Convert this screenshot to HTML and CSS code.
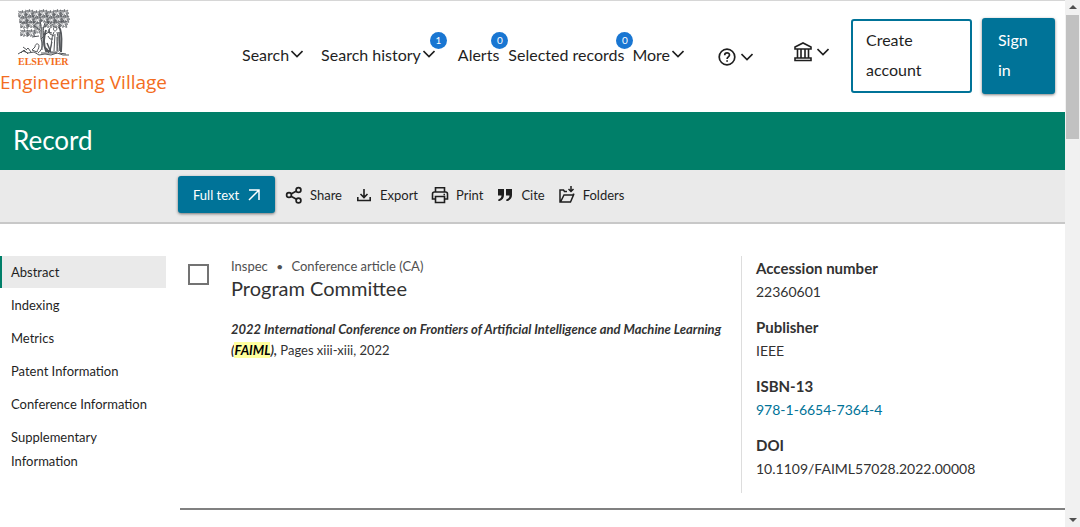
FILE: index.html
```html
<!DOCTYPE html>
<html lang="en">
<head>
    <meta charset="UTF-8">
    <meta name="viewport" content="width=device-width, initial-scale=1.0">
    <title>Engineering Village - Record</title>
    <link rel="stylesheet" href="styles.css">
</head>
<body>
    <svg class="defs" aria-hidden="true">
        <symbol id="chevron" viewBox="0 0 12 8"><path d="M.5 1L6 6.500 11.500 1" fill="none" stroke="currentColor" stroke-width="1.6"/></symbol>
        <symbol id="leaves" viewBox="0 0 12 10">
            <path d="M1 4l2-3 1 2 2-3 1 3 3-2-1 3 3 1-3 2 1 3-3-2-2 2-1-3-3 2 1-3-3 0 2-2zM2 2l3 3M6 1v3M10 3L7 5M1 8l4-2M6 9V6M10 8L8 5M4 3l3-1M1 5h3M8 6h3M0 1l2 1M11 1l-1 1M0 7l2 1M11 9L9 8" fill="none" stroke="#53565a" stroke-width=".8"/>
        </symbol>
    </svg>

    <div class="page">
        <header class="header">
            <a href="#" class="brand">
                <svg class="tree" viewBox="0 0 52 47" aria-hidden="true">
                    <use href="#leaves" x="0" y="1" width="9" height="8"/>
                    <use href="#leaves" x="7" y="0" width="9" height="8"/>
                    <use href="#leaves" x="14" y="1" width="9" height="8"/>
                    <use href="#leaves" x="21" y="0" width="9" height="8"/>
                    <use href="#leaves" x="28" y="1" width="9" height="8"/>
                    <use href="#leaves" x="35" y="0" width="9" height="8"/>
                    <use href="#leaves" x="42" y="0" width="9" height="8"/>
                    <use href="#leaves" x="1" y="7" width="9" height="8"/>
                    <use href="#leaves" x="8" y="6" width="9" height="8"/>
                    <use href="#leaves" x="15" y="7" width="9" height="8"/>
                    <use href="#leaves" x="22" y="6" width="9" height="8"/>
                    <use href="#leaves" x="29" y="7" width="9" height="8"/>
                    <use href="#leaves" x="36" y="6" width="9" height="8"/>
                    <use href="#leaves" x="43" y="6" width="9" height="8"/>
                    <use href="#leaves" x="2" y="12" width="9" height="8"/>
                    <use href="#leaves" x="9" y="12" width="9" height="7"/>
                    <use href="#leaves" x="16" y="13" width="8" height="6"/>
                    <use href="#leaves" x="26" y="12" width="9" height="7"/>
                    <use href="#leaves" x="34" y="12" width="9" height="7"/>
                    <use href="#leaves" x="41" y="11" width="9" height="8"/>
                    <use href="#leaves" x="2" y="20" width="9" height="8"/>
                    <use href="#leaves" x="9" y="20" width="9" height="8"/>
                    <use href="#leaves" x="16" y="18" width="7" height="7"/>
                    <g fill="none" stroke="#53565a">
                        <path d="M22 13c3 8-1 14 2 20 1 5-1 9-4 11M27 14c-3 7-1 13-1 19s2 8 5 11M24 18v23M25 19l6-5M22 21l-6-4M21 27l-7 1M23 30l6-6 3-1"/>
                        <path d="M28 21c-3 8-2 16 0 21h5M41 18c4 5 2 17 2 25" stroke-width="2"/>
                        <path d="M37 18c-2 0-2 4 0 4s3-4 0-4zM36 23c-3 5-2 12-4 20h7M39 23c2 6 0 13 1 20M36 27l-4-2-1-5M35 30l-3 0-2-3M37 25l-1 17M39 28v14M32 19l-2 4 4 1M34 33l-2 8"/>
                        <path d="M0 45l5-3 5 2 6-1 5 3 6-1 6 1 6-2 6 2h6M3 44l3-3 4 4M5 38l4 3M8 41l2-2 3 4M23 44h16M41 44l7 1M17 38c0-4 4-4 4-1s-2 4-2 6l-5-2z"/>
                        <path d="M29 34l3 7M28 39l3 4M41 23l1 19" stroke-width="1.5"/>
                    </g>
                </svg>
                <span class="elsevier">ELSEVIER</span>
                <span class="product">Engineering Village</span>
            </a>
            <nav class="nav" aria-label="Main">
                <a href="#">Search<svg class="chevron"><use href="#chevron"/></svg></a>
                <a href="#" class="history">Search history<svg class="chevron"><use href="#chevron"/></svg><span class="badge">1</span></a>
                <a href="#" class="alerts">Alerts<span class="badge">0</span></a>
                <a href="#" class="selected">Selected records<span class="badge">0</span></a>
                <a href="#">More<svg class="chevron"><use href="#chevron"/></svg></a>
            </nav>
            <div class="account">
                <button type="button" class="icon-button help" aria-label="Help">
                    <svg width="18" height="18" viewBox="0 0 18 18" fill="none" stroke="currentColor" stroke-width="1.7"><circle cx="9" cy="9" r="7.8"/><path d="M6.7 7.2c0-3 4.8-3 4.8-.2 0 2-2.4 1.8-2.4 4M9.1 12.2v1.6"/></svg>
                    <svg class="chevron"><use href="#chevron"/></svg>
                </button>
                <button type="button" class="icon-button institution" aria-label="Institution">
                    <svg width="18" height="20" viewBox="0 0 18 20" fill="none" stroke="currentColor" stroke-width="1.6"><path d="M1 7V5l8-4 8 4v2zM3.500 7v8.500M7 7v8.500M11 7v8.500M14.500 7v8.500M1 18.500v-2.500h16v2.500z"/></svg>
                    <svg class="chevron"><use href="#chevron"/></svg>
                </button>
                <button type="button" class="create">Create account</button>
                <button type="button" class="signin">Sign in</button>
            </div>
        </header>

        <h1 class="title">Record</h1>

        <div class="toolbar">
            <a href="#" class="fulltext">Full text
                <svg width="12" height="12" viewBox="0 0 12 12" fill="none" stroke="currentColor" stroke-width="1.5"><path d="M1 1h10v10M11 1L1 11"/></svg>
            </a>
            <button type="button" class="tool">
                <svg viewBox="0 0 18 18" fill="none" stroke="currentColor" stroke-width="1.7"><circle cx="4" cy="9" r="2.4"/><circle cx="13.500" cy="4" r="2.400"/><circle cx="13.500" cy="14.500" r="2.400"/><path d="M6 8l5.500-3M6 10.200l5.500 3"/></svg>
                Share
            </button>
            <button type="button" class="tool">
                <svg viewBox="0 0 18 18" fill="none" stroke="currentColor" stroke-width="1.6"><path d="M9 3v8M5.500 8L9 11.500 12.500 8M2.800 11v3.500h12.400V11"/></svg>
                Export
            </button>
            <button type="button" class="tool">
                <svg viewBox="0 0 18 18" fill="none" stroke="currentColor" stroke-width="1.6"><path d="M4.500 6V1.800h9V6M4.500 13H1.500V8c0-1.500 1-2 2-2h11c1 0 2 .5 2 2v5h-3M4.500 10.500h9v6h-9zM12.500 8.500h1.500"/></svg>
                Print
            </button>
            <button type="button" class="tool">
                <svg viewBox="0 0 18 18" fill="currentColor"><path d="M2 3h6v6c0 3-1.500 5-4.500 6H2.300v-1.500C4.500 12.700 5.500 11.500 5.500 9.500H2zM10 3h6v6c0 3-1.500 5-4.500 6h-1.200v-1.500c2.200-.8 3.200-2 3.200-4H10z"/></svg>
                Cite
            </button>
            <button type="button" class="tool">
                <svg viewBox="0 0 18 18" fill="none" stroke="currentColor" stroke-width="1.5"><path d="M9 5.500H6.500l-1-1.500H2v12h10.500l3-7H6l-3.500 7M15.500 9V7.500M13 0v5.500M10.500 3l2.500 2.500L15.500 3"/></svg>
                Folders
            </button>
        </div>

        <div class="content">
            <nav class="sidebar" aria-label="Record sections">
                <a href="#" class="active">Abstract</a>
                <a href="#">Indexing</a>
                <a href="#">Metrics</a>
                <a href="#">Patent Information</a>
                <a href="#">Conference Information</a>
                <a href="#">Supplementary Information</a>
            </nav>
            <main class="record">
                <input type="checkbox" class="select" aria-label="Select record">
                <article class="article">
                    <p class="type">Inspec <span class="dot">•</span> Conference article (CA)</p>
                    <h2>Program Committee</h2>
                    <p class="source"><b><i>2022 International Conference on Frontiers of Artificial Intelligence and Machine Learning (<mark>FAIML</mark>),</i></b> Pages xiii-xiii, 2022</p>
                </article>
                <dl class="details">
                    <dt>Accession number</dt>
                    <dd>22360601</dd>
                    <dt>Publisher</dt>
                    <dd>IEEE</dd>
                    <dt>ISBN-13</dt>
                    <dd><a href="#">978-1-6654-7364-4</a></dd>
                    <dt>DOI</dt>
                    <dd>10.1109/FAIML57028.2022.00008</dd>
                </dl>
            </main>
        </div>
    </div>

    <div class="scrollbar" aria-hidden="true">
        <span class="arrow up"></span>
        <span class="thumb"></span>
        <span class="arrow down"></span>
    </div>
</body>
</html>
```
FILE: styles.css
```css
* {
    box-sizing: border-box;
}
body {
    display: flex;
    height: 100vh;
    margin: 0;
    overflow: hidden;
    font-family: Lato, "Open Sans", sans-serif;
    font-size: 13px;
    color: #1f1f1f;
    background-color: #fff;
}
a {
    color: inherit;
    text-decoration: none;
}
button {
    font: inherit;
    color: inherit;
    background: none;
    border: 0;
    padding: 0;
    cursor: pointer;
}
.defs {
    position: absolute;
    width: 0;
    height: 0;
}
.page {
    flex: 1;
    min-width: 0;
}

/* Header */
.header {
    display: flex;
    height: 112px;
    padding-right: 10px;
    border-top: 1px solid #d6d6d6;
}
.brand {
    display: flex;
    flex-direction: column;
    width: 242px;
    padding-top: 8px;
    color: #f36d21;
}
.tree {
    width: 52px;
    height: 47px;
    margin-left: 18px;
}
.elsevier {
    margin-left: 18px;
    font-family: "Liberation Serif", serif;
    font-size: 10px;
    font-weight: bold;
    line-height: 12px;
}
.product {
    font-family: "Open Sans", sans-serif;
    font-size: 19px;
    line-height: 28px;
}
.nav {
    display: flex;
    height: 107px;
    align-items: center;
    font-size: 16px;
    white-space: nowrap;
}
.nav a {
    position: relative;
    margin-right: 18px;
}
.nav .history {
    margin-right: 23px;
}
.nav .alerts {
    margin-right: 9px;
}
.nav .selected {
    margin-right: 8px;
}
.chevron {
    width: 12px;
    height: 8px;
}
.nav .chevron {
    margin-left: 2px;
    vertical-align: 3px;
}
.badge {
    position: absolute;
    top: -13px;
    right: -9px;
    width: 17px;
    height: 17px;
    border-radius: 50%;
    background-color: #1976d2;
    color: #fff;
    font-size: 10px;
    line-height: 17px;
    text-align: center;
}
.nav .history .badge {
    right: -12px;
}
.account {
    display: flex;
    align-items: flex-start;
    margin-left: auto;
    font-size: 16px;
    line-height: 30px;
}
.icon-button {
    display: flex;
    align-items: center;
    gap: 5px;
}
.help {
    margin: 47px 41px 0 0;
}
.institution {
    margin: 41px 22px 0 0;
}
.create,
.signin {
    padding: 4px 13px;
    border: 2px solid #007398;
    border-radius: 3px;
    text-align: left;
}
.create {
    width: 121px;
    margin-top: 18px;
    padding-bottom: 6px;
}
.signin {
    width: 73px;
    margin: 17px 0 0 10px;
    padding: 5px 14px 7px;
    background-color: #007398;
    color: #fff;
    box-shadow: 0 1px 3px rgba(0, 0, 0, 0.5);
}
.title {
    margin: 0;
    padding: 0 0 2px 13px;
    background-color: #007f69;
    color: #fff;
    font-size: 26px;
    font-weight: normal;
    line-height: 56px;
}

/* Toolbar */
.toolbar {
    display: flex;
    height: 54px;
    padding: 6px 0 0 178px;
    background-color: #eaeaea;
    border-bottom: 2px solid #c8c8c8;
}
.fulltext {
    display: flex;
    align-items: center;
    justify-content: space-between;
    width: 97px;
    height: 37px;
    margin-right: -3px;
    padding: 0 15px;
    border-radius: 3px;
    background-color: #007398;
    color: #fff;
    box-shadow: 0 1px 3px rgba(0, 0, 0, 0.5);
}
.tool {
    display: flex;
    align-items: center;
    gap: 7px;
    height: 37px;
    margin-left: 13px;
}
.tool svg {
    width: 18px;
    height: 18px;
}

/* Record */
.content {
    display: flex;
    align-items: flex-start;
    padding-top: 32px;
}
.sidebar {
    width: 166px;
    margin-right: 14px;
}
.sidebar a {
    display: block;
    margin-bottom: 1px;
    padding: 4px 9px;
    border-left: 2px solid transparent;
    line-height: 24px;
}
.sidebar .active {
    border-left-color: #007f69;
    background-color: #eaeaea;
}
.record {
    display: flex;
    flex: 1;
    align-items: flex-start;
    padding: 0 0 15px 8px;
    border-bottom: 2px solid #808080;
    color: #323232;
}
.select {
    appearance: none;
    width: 21px;
    height: 21px;
    margin: 8px 22px 0 0;
    border: 2px solid #737373;
}
.article {
    flex: 1;
    padding-right: 8px;
}
.article p {
    margin: 0;
    line-height: 21px;
}
.article .type {
    color: #505050;
}
.dot {
    margin: 0 5px;
    font-size: 12px;
}
.article h2 {
    margin: 0 0 19px;
    font-size: 20px;
    font-weight: normal;
    line-height: 23px;
}
mark {
    background-color: #ffff9e;
    color: #000;
}
.details {
    width: 324px;
    height: 237px;
    margin: 0;
    padding-left: 14px;
    border-left: 1px solid #ddd;
    font-size: 14px;
    line-height: 24px;
}
.details dt {
    font-size: 15px;
    font-weight: bold;
}
.details dd {
    margin: 0 0 11px;
}
.details a {
    color: #007398;
}

/* Scrollbar */
.scrollbar {
    display: flex;
    flex-direction: column;
    align-items: center;
    width: 15px;
    padding: 5px 0;
    background-color: #f1f1f1;
}
.arrow {
    border: 4px solid transparent;
}
.up {
    margin-bottom: 2px;
    border-bottom-color: #505050;
    border-top: 0;
}
.down {
    margin-top: auto;
    border-top-color: #505050;
    border-bottom: 0;
}
.thumb {
    width: 13px;
    height: 124px;
    margin-top: 4px;
    background-color: #c1c1c1;
}
```
